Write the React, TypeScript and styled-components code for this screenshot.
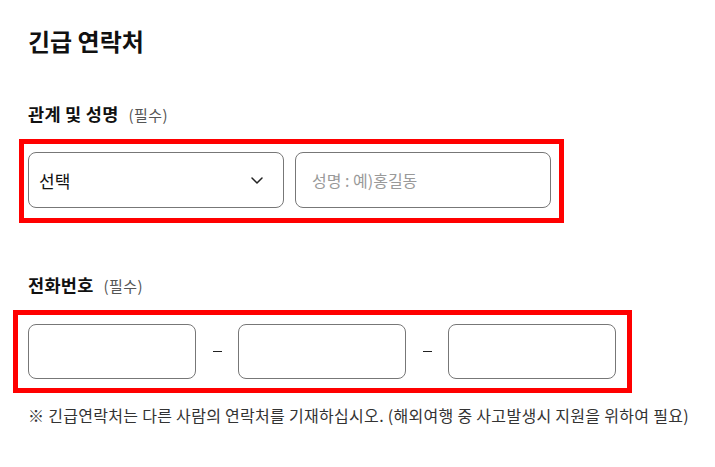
import styled, { createGlobalStyle } from 'styled-components';

const GlobalStyle = createGlobalStyle`
    body {
        margin: 0;
        background: #fff;
        font-family: 'Noto Sans CJK KR', 'Noto Sans', sans-serif;
        color: #111;
    }
`;

const App = () => {
    return (
        <Page>
            <GlobalStyle />
            <Title>긴급 연락처</Title>
            <Label>
                관계 및 성명<Required>(필수)</Required>
            </Label>
            <Highlight $left={19} $pad="8px 8px 10px 4px">
                <Row $gap={11}>
                    <Select>
                        <SelectText>선택</SelectText>
                        <svg width="12" height="7" viewBox="0 0 12 7" fill="none">
                            <path
                                d="M1 1l5 5 5-5"
                                stroke="#222"
                                strokeWidth="1.5"
                                strokeLinecap="round"
                                strokeLinejoin="round"
                            />
                        </svg>
                    </Select>
                    <Input $width={256} $height={56} placeholder="성명 : 예)홍길동" />
                </Row>
            </Highlight>
            <Label $top={51}>
                전화번호<Required>(필수)</Required>
            </Label>
            <Highlight $left={13} $pad="9px 11px 9px 10px">
                <Row $gap={0}>
                    <Input $width={168} $height={55} />
                    <Dash aria-label="-" />
                    <Input $width={168} $height={55} />
                    <Dash aria-label="-" />
                    <Input $width={168} $height={55} />
                </Row>
            </Highlight>
            <Note>※ 긴급연락처는 다른 사람의 연락처를 기재하십시오. (해외여행 중 사고발생시 지원을 위하여 필요)</Note>
        </Page>
    );
};

const Page = styled.div`
    padding: 25px 0 30px;
`;
const Title = styled.h2`
    margin: 0 0 46px 28px;
    font-size: 24px;
    line-height: 32px;
    font-weight: 700;
    color: #111;
`;
const Label = styled.div<{ $top?: number }>`
    margin: ${(p) => p.$top ?? 0}px 0 14px 28px;
    height: 22px;
    font-size: 17.5px;
    line-height: 22px;
    font-weight: 700;
    letter-spacing: 0.3px;
    color: #111;
    white-space: nowrap;
`;
const Required = styled.span`
    margin-left: 10px;
    font-size: 15px;
    line-height: 1;
    font-weight: 400;
    letter-spacing: 0.4px;
    color: #555;
`;
const Highlight = styled.div<{ $left: number; $pad: string }>`
    margin-left: ${(p) => p.$left}px;
    width: fit-content;
    border: 5px solid #ff0000;
    padding: ${(p) => p.$pad};
`;
const Row = styled.div<{ $gap: number }>`
    display: flex;
    align-items: center;
    gap: ${(p) => p.$gap}px;
`;
const Select = styled.div`
    box-sizing: border-box;
    width: 256px;
    height: 56px;
    border: 1px solid #777;
    border-radius: 8px;
    padding: 0 20px 0 10px;
    display: flex;
    align-items: center;
    justify-content: space-between;
`;
const SelectText = styled.span`
    font-size: 17px;
    color: #111;
`;
const Input = styled.input<{ $width: number; $height: number }>`
    box-sizing: border-box;
    width: ${(p) => p.$width}px;
    height: ${(p) => p.$height}px;
    border: 1px solid #777;
    border-radius: 8px;
    padding: 0 16px;
    font-family: inherit;
    font-size: 16px;
    outline: none;

    &::placeholder {
        color: #999;
    }
`;
const Dash = styled.span`
    width: 42px;
    display: flex;
    justify-content: center;

    &::before {
        content: '';
        width: 9px;
        height: 1px;
        background: #222;
    }
`;
const Note = styled.p`
    margin: 12px 0 0 28px;
    font-size: 16px;
    line-height: 20px;
    letter-spacing: 0.3px;
    color: #333;
`;

export default App;
